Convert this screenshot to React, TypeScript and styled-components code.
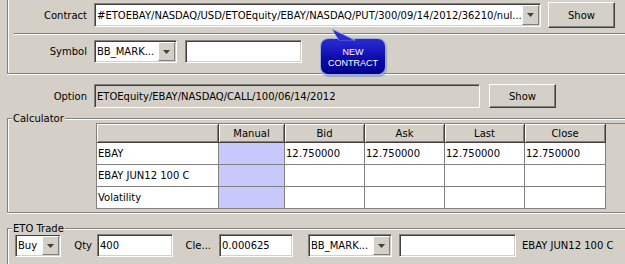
import React from "react";
import styled, { createGlobalStyle } from "styled-components";

const GRAY = "#d4d0c8";
const SHADOW = "#808080";
const DARK = "#404040";

const GlobalStyle = createGlobalStyle`
  html, body { margin: 0; padding: 0; background: ${GRAY}; }
  body { font-family: "DejaVu Sans", Tahoma, sans-serif; font-size: 10px; color: #000; }
`;

const Root = styled.div`
  position: relative;
  width: 625px;
  height: 264px;
  overflow: hidden;
  background: ${GRAY};
`;

const TopPanel = styled.div`
  display: flow-root;
  box-sizing: border-box;
  height: 74px;
  margin-left: 7px;
  border-left: 1px solid ${SHADOW};
  border-bottom: 1px solid ${SHADOW};
  box-shadow: inset 1px 0 0 #fff, 0 1px 0 #fff;
`;

const Row = styled.div<{ $top?: number; $h?: number; $left?: number }>`
  display: flex;
  align-items: center;
  height: ${(p) => p.$h ?? 24}px;
  margin-top: ${(p) => p.$top ?? 0}px;
  padding-left: ${(p) => p.$left ?? 0}px;
`;

const Label = styled.div<{ $w: number; $pr?: number }>`
  flex: none;
  width: ${(p) => p.$w}px;
  padding-right: ${(p) => p.$pr ?? 0}px;
  box-sizing: border-box;
  text-align: right;
  white-space: nowrap;
`;

const Separator = styled.div`
  margin-left: 6px;
  margin-top: 6px;
  border-top: 1px solid ${SHADOW};
  border-bottom: 1px solid #fff;
`;

const Sunken = styled.div<{ $w: number; $h?: number; $ml?: number; $ro?: boolean }>`
  flex: none;
  display: flex;
  align-items: stretch;
  box-sizing: border-box;
  width: ${(p) => p.$w}px;
  height: ${(p) => p.$h ?? 23}px;
  margin-left: ${(p) => p.$ml ?? 0}px;
  background: ${(p) => (p.$ro ? GRAY : "#fff")};
  border: 1px solid;
  border-color: ${SHADOW} #fff #fff ${SHADOW};
  box-shadow: inset 1px 1px 0 ${DARK}, inset -1px -1px 0 ${GRAY};
  padding: 1px;
`;

const FieldText = styled.div`
  flex: 1;
  min-width: 0;
  display: flex;
  align-items: center;
  padding-left: 1px;
  white-space: nowrap;
  overflow: hidden;
`;

const DropButton = styled.div`
  flex: none;
  width: 17px;
  box-sizing: border-box;
  display: flex;
  align-items: center;
  justify-content: center;
  background: ${GRAY};
  border: 1px solid;
  border-color: #fff ${SHADOW} ${SHADOW} #fff;
`;

const Button = styled.div<{ $w?: number; $h?: number; $ml?: number }>`
  flex: none;
  box-sizing: border-box;
  width: ${(p) => p.$w ?? 67}px;
  height: ${(p) => p.$h ?? 24}px;
  margin-left: ${(p) => p.$ml ?? 0}px;
  display: flex;
  align-items: center;
  justify-content: center;
  background: ${GRAY};
  border: 1px solid;
  border-color: #fff ${DARK} ${DARK} #fff;
  box-shadow: inset -1px -1px 0 ${SHADOW};
`;

const Group = styled.div<{ $top: number; $h: number }>`
  position: relative;
  box-sizing: border-box;
  margin-left: 7px;
  margin-top: ${(p) => p.$top}px;
  height: ${(p) => p.$h}px;
  border-top: 1px solid ${SHADOW};
  border-left: 1px solid ${SHADOW};
  border-bottom: 1px solid ${SHADOW};
  box-shadow: inset 1px 1px 0 #fff, 0 1px 0 #fff;
  padding-top: 4px;
`;

const GroupTitle = styled.div`
  position: absolute;
  top: -7px;
  left: 4px;
  padding: 0 1px;
  line-height: 13px;
  background: ${GRAY};
`;

const TableViewport = styled.div`
  margin-left: 88px;
  height: 85px;
  overflow: hidden;
  border-top: 1px solid ${SHADOW};
  border-left: 1px solid ${SHADOW};
`;

const Grid = styled.table`
  table-layout: fixed;
  width: 509px;
  border-collapse: separate;
  border-spacing: 0;
  font: inherit;
`;

const HeadCell = styled.th`
  box-sizing: border-box;
  height: 19px;
  padding: 0;
  font-weight: normal;
  text-align: center;
  background: ${GRAY};
  border-right: 1px solid ${DARK};
  border-bottom: 1px solid ${DARK};
  box-shadow: inset 1px 1px 0 #fff, inset -1px -1px 0 ${SHADOW};
`;

const Cell = styled.td<{ $manual?: boolean }>`
  box-sizing: border-box;
  height: 22px;
  padding: 0 0 0 1px;
  white-space: nowrap;
  overflow: hidden;
  background: ${(p) => (p.$manual ? "#c8c8fc" : "#fff")};
  border-right: 1px solid ${SHADOW};
  border-bottom: 1px solid ${SHADOW};
`;

const PlainText = styled.div<{ $ml: number }>`
  flex: none;
  margin-left: ${(p) => p.$ml}px;
  white-space: nowrap;
`;

const Bubble = styled.div`
  position: absolute;
  left: 321px;
  top: 39px;
  width: 64px;
  height: 35px;
  box-sizing: border-box;
  padding-top: 2px;
  border-radius: 7px;
  background: linear-gradient(#2b2bd6, #0a0aa8 60%, #00008c);
  box-shadow: 0 0 0 1px #9cb0d6, 1px 2px 1px 1px rgba(120, 140, 180, 0.6);
  display: flex;
  flex-direction: column;
  align-items: center;
  justify-content: center;
  color: #fff;
  font-family: "Liberation Sans", Arial, sans-serif;
  font-size: 9px;
  line-height: 11px;
  text-align: center;
`;

const BubbleTail = styled.svg`
  position: absolute;
  left: 0;
  top: -10px;
  overflow: visible;
`;

const Arrow = () => (
  <svg width="7" height="4" viewBox="0 0 7 4">
    <path d="M0 0h7L3.5 4z" fill="#404040" />
  </svg>
);

const Combo = ({ text, w, h, ml }: { text: string; w: number; h?: number; ml?: number }) => (
  <Sunken $w={w} $h={h} $ml={ml}>
    <FieldText>{text}</FieldText>
    <DropButton>
      <Arrow />
    </DropButton>
  </Sunken>
);

const Field = ({ text = "", w, h, ml, ro }: { text?: string; w: number; h?: number; ml?: number; ro?: boolean }) => (
  <Sunken $w={w} $h={h} $ml={ml} $ro={ro}>
    <FieldText>{text}</FieldText>
  </Sunken>
);

const columns = [122, 66, 80, 80, 80, 81];
const heads = ["", "Manual", "Bid", "Ask", "Last", "Close"];
const rows: string[][] = [
  ["EBAY", "", "12.750000", "12.750000", "12.750000", "12.750000"],
  ["EBAY JUN12 100 C", "", "", "", "", ""],
  ["Volatility", "", "", "", "", ""],
];

export default function App() {
  return (
    <Root>
      <GlobalStyle />
      <TopPanel>
        <Row $top={3} $h={24}>
          <Label $w={79}>Contract</Label>
          <Combo
            w={447}
            h={24}
            ml={7}
            text="#ETOEBAY/NASDAQ/USD/ETOEquity/EBAY/NASDAQ/PUT/300/09/14/2012/36210/nul..."
          />
          <Button $ml={7} $h={26}>Show</Button>
        </Row>
        <Separator />
        <Row $top={5} $h={23}>
          <Label $w={79}>Symbol</Label>
          <Combo w={83} ml={7} text="BB_MARK..." />
          <Field w={117} ml={8} />
        </Row>
      </TopPanel>
      <Row $top={10} $h={24} $left={8}>
        <Label $w={79}>Option</Label>
        <Field w={386} h={24} ml={7} ro text="ETOEquity/EBAY/NASDAQ/CALL/100/06/14/2012" />
        <Button $ml={9} $h={24}>Show</Button>
      </Row>
      <Group $top={10} $h={95}>
        <GroupTitle>Calculator</GroupTitle>
        <TableViewport>
          <Grid>
            <colgroup>
              {columns.map((w, i) => (
                <col key={i} style={{ width: w }} />
              ))}
            </colgroup>
            <thead>
              <tr>
                {heads.map((h, i) => (
                  <HeadCell key={i}>{h}</HeadCell>
                ))}
              </tr>
            </thead>
            <tbody>
              {rows.map((r, ri) => (
                <tr key={ri}>
                  {r.map((c, ci) => (
                    <Cell key={ci} $manual={ci === 1}>
                      {c}
                    </Cell>
                  ))}
                </tr>
              ))}
            </tbody>
          </Grid>
        </TableViewport>
      </Group>
      <Group $top={15} $h={60}>
        <GroupTitle>ETO Trade</GroupTitle>
        <Row $top={1} $h={23}>
          <Combo w={46} ml={7} text="Buy" />
          <Label $w={36} $pr={5}>Qty</Label>
          <Field w={76} text="400" />
          <Label $w={46} $pr={8}>Cle...</Label>
          <Field w={74} text="0.000625" />
          <Combo w={84} ml={15} text="BB_MARK..." />
          <Field w={117} ml={7} />
          <PlainText $ml={6}>EBAY JUN12 100 C</PlainText>
        </Row>
      </Group>
      <Bubble>
        <BubbleTail width="40" height="11" viewBox="0 0 40 11">
          <path d="M11 0 L18 11 L34 11 Z" fill="#2b2bd6" stroke="#9cb0d6" strokeWidth="1" />
          <path d="M12.5 2.5 L18.5 11.5 L33 11.5 Z" fill="#2b2bd6" />
        </BubbleTail>
        <div>NEW</div>
        <div>CONTRACT</div>
      </Bubble>
    </Root>
  );
}
